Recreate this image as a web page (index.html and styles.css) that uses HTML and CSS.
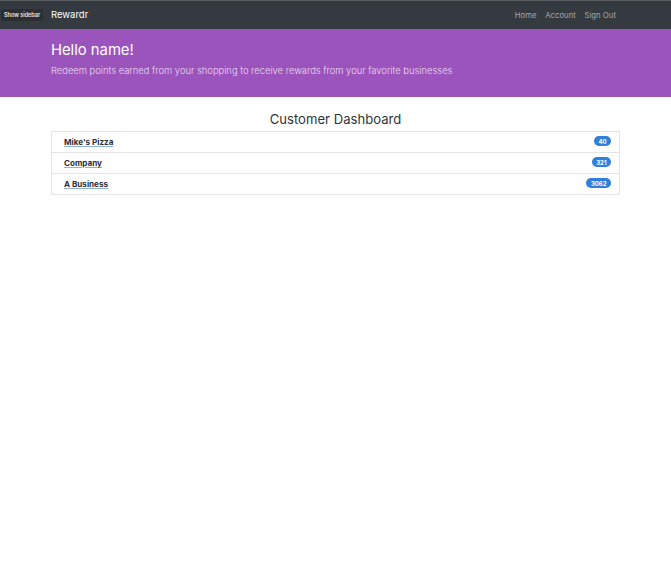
FILE: index.html
```html
<!DOCTYPE html>
<html lang="en">
<head>
<meta charset="utf-8">
<title>Rewardr</title>
<link rel="stylesheet" href="styles.css">
</head>
<body>
<nav class="navbar">
  <button class="sidebar-btn">Show sidebar</button>
  <div class="container nav-inner">
    <a class="brand" href="#">Rewardr</a>
    <ul class="nav-links">
      <li><a href="#">Home</a></li>
      <li><a href="#">Account</a></li>
      <li><a href="#">Sign Out</a></li>
    </ul>
  </div>
</nav>
<header class="jumbotron">
  <div class="container">
    <h1>Hello name!</h1>
    <p class="lead">Redeem points earned from your shopping to receive rewards from your favorite businesses</p>
  </div>
</header>
<main class="container">
  <h2 class="title">Customer Dashboard</h2>
  <ul class="list">
    <li class="item"><a href="#">Mike's Pizza</a><span class="badge">40</span></li>
    <li class="item"><a href="#">Company</a><span class="badge">321</span></li>
    <li class="item"><a href="#">A Business</a><span class="badge">3062</span></li>
  </ul>
</main>
</body>
</html>
```
FILE: styles.css
```css
* { box-sizing: border-box; }
html, body { margin: 0; padding: 0; }
body {
  font-family: Inter, "Liberation Sans", Arial, sans-serif;
  background: #fff;
  color: #212529;
  width: 671px;
  height: 573px;
  overflow: hidden;
}
.container {
  width: 569px;
  margin: 0 auto;
}
.navbar {
  position: relative;
  background: #343a40;
  border-top: 1px solid #5a5d60;
  height: 29px;
  display: flex;
  align-items: center;
}
.sidebar-btn {
  position: absolute;
  left: 1px;
  top: 8px;
  height: 12px;
  padding: 0 3px;
  font-family: inherit;
  font-size: 5.5px;
  font-weight: 600;
  color: #e8e8e8;
  background: #2b2f33;
  border: none;
  border-radius: 2px;
}
.nav-inner {
  display: flex;
  align-items: center;
  justify-content: space-between;
}
.brand {
  color: #fff;
  font-size: 9.5px;
  line-height: 12px;
  text-decoration: none;
}
.nav-links {
  display: flex;
  align-items: center;
  list-style: none;
  margin: 0 4px 0 0;
  padding: 0;
  gap: 8.5px;
  font-size: 7.8px;
  line-height: 10px;
}
.nav-links a {
  color: #a3a5a7;
  text-decoration: none;
}
.jumbotron {
  background: #9b54bc;
  color: #fff;
  height: 68px;
  padding-top: 12px;
}
.jumbotron h1 {
  margin: 0;
  font-size: 14.8px;
  font-weight: 400;
  line-height: 18px;
}
.lead {
  margin: 6px 0 0;
  font-size: 9.4px;
  line-height: 11px;
  font-weight: 300;
  color: #ecdcf3;
}
.title {
  margin: 13px 0 3px;
  text-align: center;
  font-size: 13.1px;
  font-weight: 400;
  color: #343434;
  line-height: 18px;
}
.list {
  list-style: none;
  margin: 0;
  padding: 0;
  border: 1px solid #e4e4e4;
}
.item {
  display: flex;
  justify-content: space-between;
  align-items: center;
  height: 21px;
  padding: 0 8px 0 12px;
  border-top: 1px solid #e4e4e4;
}
.item:first-child { border-top: none; height: 20px; }
.item a {
  font-size: 8.1px;
  font-weight: 700;
  color: #2a3038;
  text-decoration: underline;
  text-decoration-color: #8fb0dc;
}
.badge {
  background: #2f7fdc;
  color: #fff;
  font-size: 6px;
  font-weight: 700;
  padding: 1.5px 4.5px;
  border-radius: 6px;
  line-height: 7px;
  position: relative;
  top: -1px;
}
```
